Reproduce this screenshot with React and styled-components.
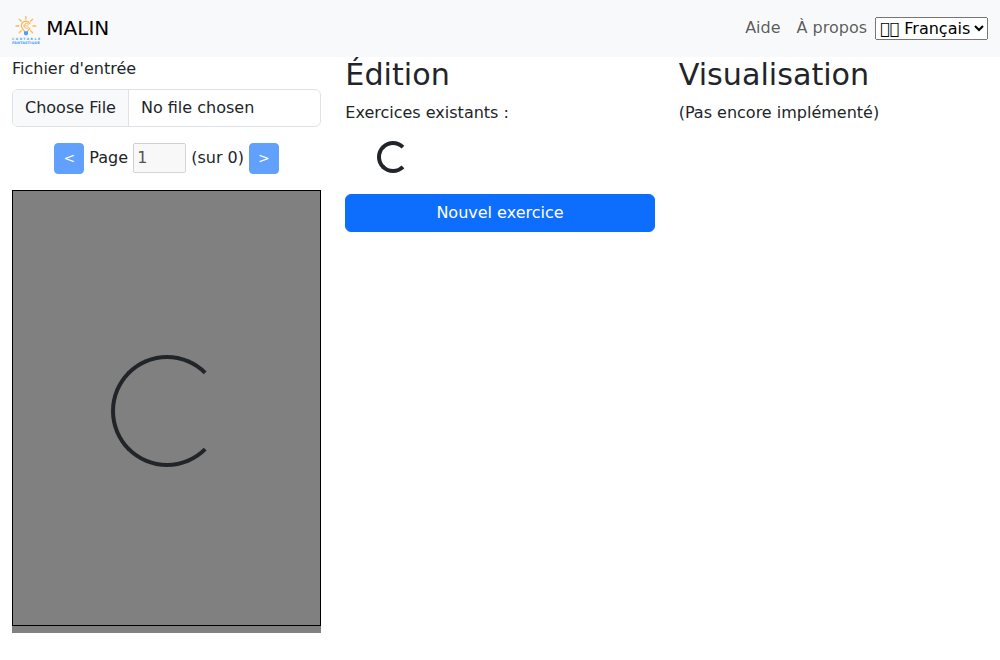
import React from "react";
import styled, { createGlobalStyle, css } from "styled-components";

const Global = createGlobalStyle`
  *, *::before, *::after { box-sizing: border-box; }
  body {
    margin: 0;
    font-family: "DejaVu Sans", sans-serif;
    font-size: 16px;
    line-height: 1.5;
    color: #212529;
    background: #fff;
  }
  input, button, select { font-family: inherit; font-size: inherit; line-height: inherit; margin: 0; }
`;

const Navbar = styled.nav`
  display: flex;
  align-items: center;
  justify-content: space-between;
  height: 57px;
  padding: 0 12px;
  background: #f8f9fa;
`;

const Brand = styled.a`
  display: flex;
  align-items: flex-start;
  gap: 6.36px;
  font-size: 20px;
  line-height: 30px;
  color: #000;
`;

const BrandName = styled.span`
  padding-top: 1px;
`;

const LogoSvg = styled.svg`
  display: block;
  width: 28px;
  height: 30px;
  margin-top: 3px;
  overflow: visible;
`;

const NavLinks = styled.div`
  display: flex;
  align-items: center;
`;

const NavLink = styled.a`
  padding: 7px 8px 8px;
  color: rgba(0, 0, 0, 0.65);
`;

const LanguageSelect = styled.select`
  word-wrap: normal;
  text-transform: none;
`;

const Row = styled.main`
  display: grid;
  grid-template-columns: repeat(3, 1fr);
`;

const Column = styled.section`
  min-width: 0;
  padding: 0 12px;
`;

const Heading = styled.h1`
  margin: 0 0 8px;
  font-size: 30.2px;
  font-weight: 500;
  line-height: 1.2;
`;

const Text = styled.p`
  margin: 0 0 16px;
  ${(p) => p.$center && css`text-align: center;`}
`;

const Label = styled.label`
  display: block;
  margin-bottom: 8px;
`;

const FileInput = styled.input`
  display: block;
  width: 100%;
  height: 38px;
  margin-bottom: 16px;
  padding: 6px 12px;
  overflow: hidden;
  color: #212529;
  background: #fff;
  border: 1px solid #dee2e6;
  border-radius: 6px;

  &::file-selector-button {
    margin: -6px 12px -6px -12px;
    padding: 6px 12px;
    font: inherit;
    color: #212529;
    background: #f8f9fa;
    border: 0 solid #dee2e6;
    border-inline-end-width: 1px;
    border-radius: 0;
  }
`;

const Button = styled.button`
  display: inline-block;
  padding: 6px 12px;
  color: #fff;
  vertical-align: middle;
  background: #0d6efd;
  border: 1px solid #0d6efd;
  border-radius: 6px;
  ${(p) => p.$small && css`
    padding: 4px 8px;
    font-size: 14px;
    border-radius: 4px;
  `}
  ${(p) => p.$block && css`
    display: block;
    width: 100%;
  `}
  &:disabled { opacity: 0.65; }
`;

const PageInput = styled.input`
  width: 53px;
`;

const Preview = styled.div`
  display: grid;
  height: 443px;
  background: #808080;
`;

const PageCanvas = styled.div`
  display: flex;
  align-items: center;
  justify-content: center;
  height: 436px;
  padding-top: 6px;
  border: 1px solid #000;
`;

const Spinner = styled.span`
  display: inline-block;
  width: ${(p) => p.$size}px;
  height: ${(p) => p.$size}px;
  vertical-align: -0.125em;
  border: 4px solid #212529;
  border-right-color: transparent;
  border-radius: 50%;
`;

const ExerciseList = styled.div`
  margin-bottom: 16px;
  padding-left: 32px;
`;

function Logo() {
  return (
    <LogoSvg viewBox="0 0 28 30">
      <g stroke="#fdb858" strokeWidth="1.3" strokeLinecap="round" fill="none">
        <path d="M13.9 1.3v2.8M7.2 4.2l2.1 2.1M20.6 4.2l-2.1 2.1M4 11h2.8M21 11h2.8M7.2 17.7l2-2M20.6 17.7l-2-2" />
        <path d="M12.3 16.2c-.2-1.2-3-2.4-3-5.4a4.6 4.6 0 0 1 8.6-2.2M17.9 13.2c-.7 1.3-2.1 1.9-2.4 3" />
        <path d="M16.6 9.3a2.5 2.5 0 1 0 0 3.2M11.6 10.9h4.2" strokeWidth="1" />
      </g>
      <path d="M12 16.2h4v2.8l-.9 1.3h-2.2l-.9-1.3z" fill="#4a9df5" />
      <g fill="#4a9ff8" fontFamily="DejaVu Sans, sans-serif" fontWeight="700">
        <text x="0" y="25.2" fontSize="3.1" textLength="28" lengthAdjust="spacing">CARTABLE</text>
        <text x="0" y="28.8" fontSize="3.3" textLength="28" lengthAdjust="spacingAndGlyphs">FANTASTIQUE</text>
      </g>
    </LogoSvg>
  );
}

export default function App() {
  return (
    <>
      <Global />
      <Navbar>
        <Brand>
          <Logo />
          <BrandName>MALIN</BrandName>
        </Brand>
        <NavLinks>
          <NavLink>Aide</NavLink>
          <NavLink>À propos</NavLink>
          <LanguageSelect defaultValue="fr">
            <option value="fr">{"\u{F0000}\u{F0000} Français"}</option>
          </LanguageSelect>
        </NavLinks>
      </Navbar>
      <Row>
        <Column>
          <Label htmlFor="source">Fichier d'entrée</Label>
          <FileInput id="source" type="file" />
          <Text $center>
            <Button $small disabled>&lt;</Button> Page{" "}
            <PageInput type="number" defaultValue="1" disabled /> (sur 0){" "}
            <Button $small disabled>&gt;</Button>
          </Text>
          <Preview>
            <PageCanvas>
              <Spinner $size={112} />
            </PageCanvas>
          </Preview>
        </Column>
        <Column>
          <Heading>Édition</Heading>
          <Text>Exercices existants :</Text>
          <ExerciseList>
            <Spinner $size={32} />
          </ExerciseList>
          <Button $block>Nouvel exercice</Button>
        </Column>
        <Column>
          <Heading>Visualisation</Heading>
          <Text>(Pas encore implémenté)</Text>
        </Column>
      </Row>
    </>
  );
}
